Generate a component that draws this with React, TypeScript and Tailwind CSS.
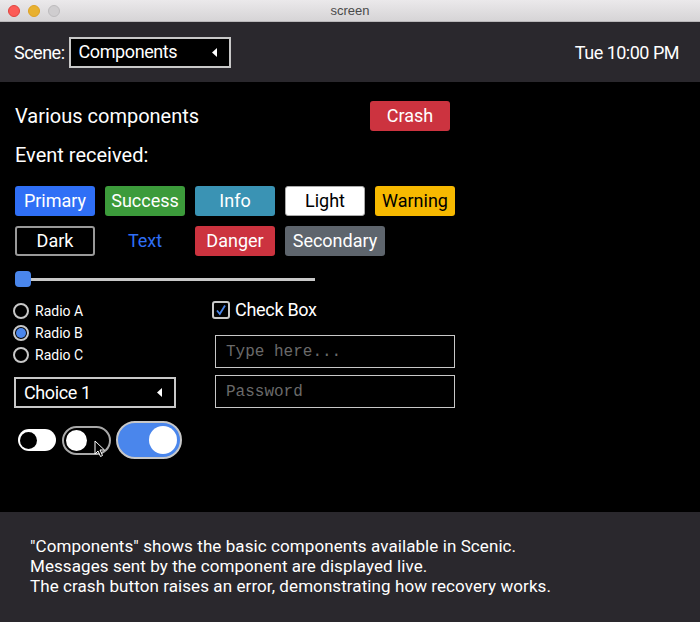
import React from "react";

const roboto = { fontFamily: "Roboto, 'Noto Sans', sans-serif" };

function Btn({
  label,
  cls,
  w = "w-[80px]",
}: {
  label: string;
  cls: string;
  w?: string;
}) {
  return (
    <div
      className={`flex h-[30px] ${w} items-center justify-center rounded-[3px] text-[18px] leading-none ${cls}`}
    >
      {label}
    </div>
  );
}

function Dropdown({ label, w }: { label: string; w: string }) {
  return (
    <div
      className={`flex h-[31px] ${w} items-center justify-between border-2 border-[#c8c8c8] bg-black pl-[8px] pr-[12px] text-[18px] text-white`}
    >
      <span className="leading-none tracking-[-0.4px]">{label}</span>
      <svg width="5" height="9" viewBox="0 0 5 9">
        <path d="M5 0 L0 4.5 L5 9 Z" fill="#fff" />
      </svg>
    </div>
  );
}

function Radio({ label, checked }: { label: string; checked?: boolean }) {
  return (
    <div className="flex h-[22px] items-center gap-[6px]">
      <div className="flex h-[16px] w-[16px] items-center justify-center rounded-full border-2 border-[#c8c8c8]">
        {checked && <div className="h-[10px] w-[10px] rounded-full bg-[#4a86ec]" />}
      </div>
      <span className="text-[14px] leading-none text-white">{label}</span>
    </div>
  );
}

export default function App() {
  return (
    <div className="flex h-[622px] w-[700px] flex-col bg-black" style={roboto}>
      {/* window title bar */}
      <div className="relative flex h-[22px] items-center justify-center border-b border-[#b9b7b9] bg-gradient-to-b from-[#ebe9eb] to-[#d6d4d6]">
        <div className="absolute left-[8px] top-[5px] flex gap-[8px]">
          <div className="h-[12px] w-[12px] rounded-full border border-[#e0443e] bg-[#fc5b57]" />
          <div className="h-[12px] w-[12px] rounded-full border border-[#dea123] bg-[#e8b130]" />
          <div className="h-[12px] w-[12px] rounded-full border border-[#bdbbbd] bg-[#cfcdcf]" />
        </div>
        <span
          className="text-[13px] text-[#4a4a4a]"
          style={{ fontFamily: "'Liberation Sans', sans-serif" }}
        >
          screen
        </span>
      </div>

      {/* scene header */}
      <div className="flex h-[60px] items-center justify-between bg-[#2a282d] pl-[14px] pr-[21px] text-[18px] tracking-[-0.5px] text-white">
        <div className="flex items-center gap-[4px]">
          <span>Scene:</span>
          <Dropdown label="Components" w="w-[162px]" />
        </div>
        <span>Tue 10:00 PM</span>
      </div>

      {/* components */}
      <div className="flex flex-1 flex-col pt-[19px] text-white">
        <div className="ml-[15px] flex w-[435px] items-center justify-between">
          <span className="text-[20px] leading-none">Various components</span>
          <Btn label="Crash" cls="bg-[#cc333f] text-white" />
        </div>
        <div className="ml-[15px] mt-[9px] flex h-[30px] items-center text-[20px]">
          Event received:
        </div>

        <div className="ml-[15px] mt-[16px] flex flex-col gap-[10px]">
          <div className="flex gap-[10px]">
            <Btn label="Primary" cls="bg-[#2f6ff6] text-white" />
            <Btn label="Success" cls="bg-[#3c9b3b] text-white" />
            <Btn label="Info" cls="bg-[#3a93b4] text-white" />
            <Btn label="Light" cls="border border-[#aaa] bg-white text-black" />
            <Btn label="Warning" cls="bg-[#f7b900] text-black" />
          </div>
          <div className="flex gap-[10px]">
            <Btn label="Dark" cls="border-2 border-[#999] bg-black text-white" />
            <Btn label="Text" cls="text-[#2f6ff6]" />
            <Btn label="Danger" cls="bg-[#cc333f] text-white" />
            <Btn label="Secondary" cls="bg-[#5e656d] text-white" w="w-[100px]" />
          </div>
        </div>

        {/* slider */}
        <div className="ml-[15px] mt-[15px] flex h-[16px] w-[300px] items-center">
          <div className="h-[16px] w-[16px] rounded-[4px] bg-[#4a86ec]" />
          <div className="h-[3px] flex-1 bg-[#c8c8c8]" />
        </div>

        <div className="mt-[13px] flex">
          <div className="ml-[13px] flex w-[199px] flex-col">
            <Radio label="Radio A" />
            <Radio label="Radio B" checked />
            <Radio label="Radio C" />
            <div className="ml-[1px] mt-[11px]">
              <Dropdown label="Choice 1" w="w-[162px]" />
            </div>
            <div className="relative ml-[5px] mt-[13px] flex items-center">
              <div className="flex h-[22px] w-[38px] items-center rounded-full bg-white pl-[2px]">
                <div className="h-[17px] w-[17px] rounded-full bg-black" />
              </div>
              <div className="ml-[6px] flex h-[29px] w-[49px] items-center rounded-full border-2 border-[#a8a8a8] bg-black pl-[2px]">
                <div className="h-[21px] w-[21px] rounded-full bg-white" />
              </div>
              <div className="ml-[5px] flex h-[38px] w-[66px] items-center justify-end rounded-full border-2 border-[#c8c8c8] bg-[#4a86ec] pr-[3px]">
                <div className="h-[28px] w-[28px] rounded-full bg-white" />
              </div>
              <svg
                className="absolute left-[76px] top-[19px]"
                width="12"
                height="18"
                viewBox="0 0 12 18"
              >
                <path
                  d="M1 1 L1 14 L4 11 L6.5 16.5 L8.5 15.5 L6 10 L10.5 10 Z"
                  fill="#000"
                  stroke="#fff"
                  strokeWidth="1"
                  strokeLinejoin="round"
                />
              </svg>
            </div>
          </div>

          <div className="flex flex-col">
            <div className="mt-[1px] flex h-[18px] items-center gap-[5px]">
              <div className="flex h-[18px] w-[18px] items-center justify-center rounded-[3px] border-2 border-[#c8c8c8]">
                <svg width="12" height="12" viewBox="0 0 12 12">
                  <path
                    d="M2 6.5 L4.8 10 L10 1.5"
                    fill="none"
                    stroke="#4a86ec"
                    strokeWidth="1.8"
                  />
                </svg>
              </div>
              <span className="text-[18px] leading-none tracking-[-0.3px]">Check Box</span>
            </div>
            <div
              className="ml-[3px] mt-[16px] flex flex-col gap-[7px] text-[16px] text-[#6a6a6a]"
              style={{ fontFamily: "'Liberation Mono', monospace" }}
            >
              <div className="flex h-[33px] w-[240px] items-center border border-[#c8c8c8] pl-[10px]">
                Type here...
              </div>
              <div className="flex h-[33px] w-[240px] items-center border border-[#c8c8c8] pl-[10px]">
                Password
              </div>
            </div>
          </div>
        </div>
      </div>

      {/* description */}
      <div className="flex h-[110px] flex-col bg-[#2a282d] pl-[30px] pt-[24px] text-[17px] leading-[20px] tracking-[0.08px] text-white">
        <span>"Components" shows the basic components available in Scenic.</span>
        <span>Messages sent by the component are displayed live.</span>
        <span>The crash button raises an error, demonstrating how recovery works.</span>
      </div>
    </div>
  );
}
